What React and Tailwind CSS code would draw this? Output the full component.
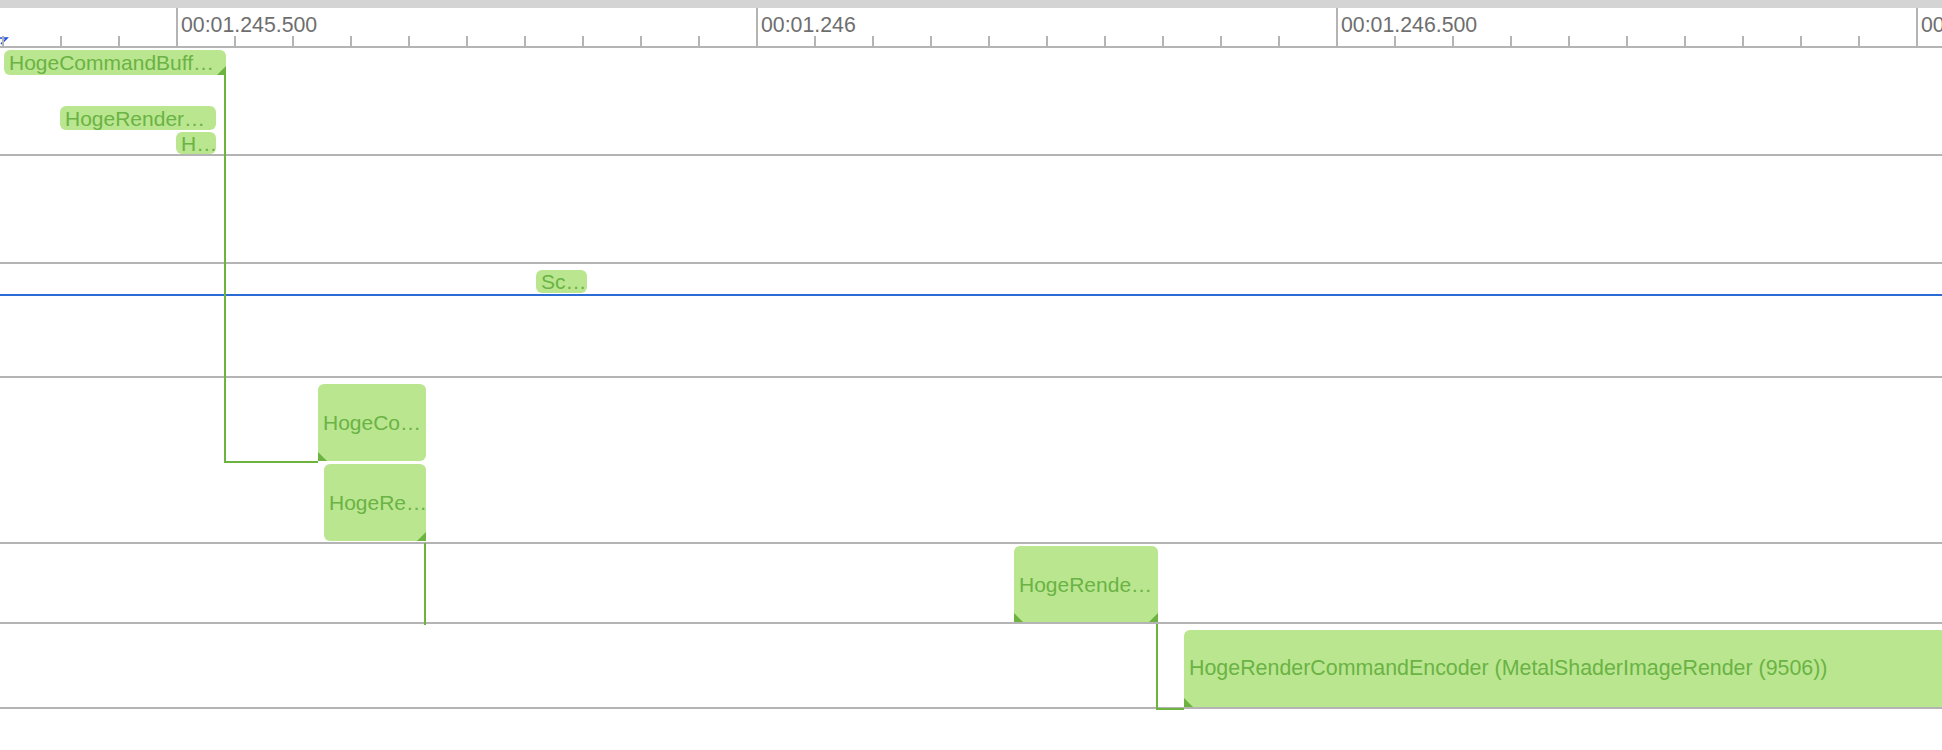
import React from "react";

const LINE = "#6cb33f";

function Corner({ side }) {
  const left = side === "left";
  return (
    <svg
      className={left ? "absolute left-0 bottom-0 w-[9px] h-[9px]" : "absolute right-0 bottom-0 w-[9px] h-[9px]"}
      viewBox="0 0 9 9"
    >
      <polygon points={left ? "0,0 0,9 9,9" : "9,0 9,9 0,9"} fill={LINE} />
    </svg>
  );
}

function Chip({ className, text, corners = [] }) {
  return (
    <div
      className={
        "absolute flex items-center px-[5px] rounded-[6px] bg-[#bae690] text-[#6ab344] whitespace-nowrap overflow-hidden leading-none " +
        className
      }
    >
      <span>{text}</span>
      {corners.map((c) => (
        <Corner key={c} side={c} />
      ))}
    </div>
  );
}

function Ruler() {
  const labels = ["00:01.245.500", "00:01.246", "00:01.246.500", "00:01.247"];
  return (
    <div className="relative h-[40px] flex pl-[2px] border-b-2 border-[#b4b4b4] overflow-hidden">
      <svg className="absolute left-0 top-[29px] w-[9px] h-[8px]" viewBox="0 0 9 8">
        <polyline points="0,1 7,1 1,7" fill="none" stroke="#1f4fe0" strokeWidth="1.6" />
      </svg>
      {Array.from({ length: 34 }).map((_, i) => {
        const major = i % 10 === 3;
        const label = labels[(i - 3) / 10];
        return (
          <div key={i} className="relative w-[58px] shrink-0 h-full">
            <div
              className={
                major
                  ? "absolute left-0 top-0 bottom-0 w-[2px] bg-[#b4b4b4]"
                  : "absolute left-0 bottom-0 h-[10px] w-[2px] bg-[#b4b4b4]"
              }
            />
            {major && (
              <span className="absolute left-[5px] top-[5px] text-[21.3px] text-[#6e6e6e] whitespace-nowrap leading-[24px]">
                {label}
              </span>
            )}
          </div>
        );
      })}
    </div>
  );
}

export default function App() {
  return (
    <div className="relative w-[1942px] h-[750px] bg-white overflow-hidden text-[21px] font-['Liberation_Sans',Arial,sans-serif]">
      <div className="h-[8px] bg-[#d4d4d4]" />
      <Ruler />

      {/* Row 1 */}
      <div className="relative h-[108px] border-b-2 border-[#b4b4b4]">
        <Chip className="left-[4px] top-[2px] w-[222px] h-[25px] rounded-br-none" text="HogeCommandBuff…" corners={["right"]} />
        <Chip className="left-[60px] top-[58px] w-[156px] h-[24px]" text="HogeRender…" />
        <Chip className="left-[176px] top-[84px] w-[40px] h-[22px]" text="H…" />
      </div>

      {/* Row 2 */}
      <div className="relative h-[108px] border-b-2 border-[#b4b4b4]" />

      {/* Row 3 */}
      <div className="relative h-[114px] border-b-2 border-[#b4b4b4]">
        <Chip className="left-[536px] top-[6px] w-[51px] h-[23px]" text="Sc…" />
        <div className="absolute left-0 right-0 top-[30px] h-[2px] bg-[#2b6bd6]" />
      </div>

      {/* Row 4 */}
      <div className="relative h-[166px] border-b-2 border-[#b4b4b4]">
        <Chip className="left-[318px] top-[6px] w-[108px] h-[77px] rounded-bl-none" text="HogeCo…" corners={["left"]} />
        <Chip className="left-[324px] top-[86px] w-[102px] h-[77px] rounded-br-none" text="HogeRe…" corners={["right"]} />
      </div>

      {/* Row 5 */}
      <div className="relative h-[80px] border-b-2 border-[#b4b4b4]">
        <Chip className="left-[1014px] top-[2px] w-[144px] h-[76px] rounded-b-none" text="HogeRende…" corners={["left", "right"]} />
      </div>

      {/* Row 6 */}
      <div className="relative h-[85px] border-b-2 border-[#b4b4b4]">
        <Chip
          className="left-[1184px] top-[6px] w-[800px] h-[77px] rounded-r-none rounded-bl-none text-[21.4px]"
          text="HogeRenderCommandEncoder (MetalShaderImageRender (9506))"
          corners={["left"]}
        />
      </div>

      {/* Dependency connectors */}
      <svg className="absolute left-0 top-0 w-[1942px] h-[750px] pointer-events-none" viewBox="0 0 1942 750">
        <polyline points="225,70 225,462 318,462" fill="none" stroke={LINE} strokeWidth="2" />
        <polyline points="425,543 425,625" fill="none" stroke={LINE} strokeWidth="2" />
        <polyline points="1157,624 1157,709 1184,709" fill="none" stroke={LINE} strokeWidth="2" />
      </svg>
    </div>
  );
}
